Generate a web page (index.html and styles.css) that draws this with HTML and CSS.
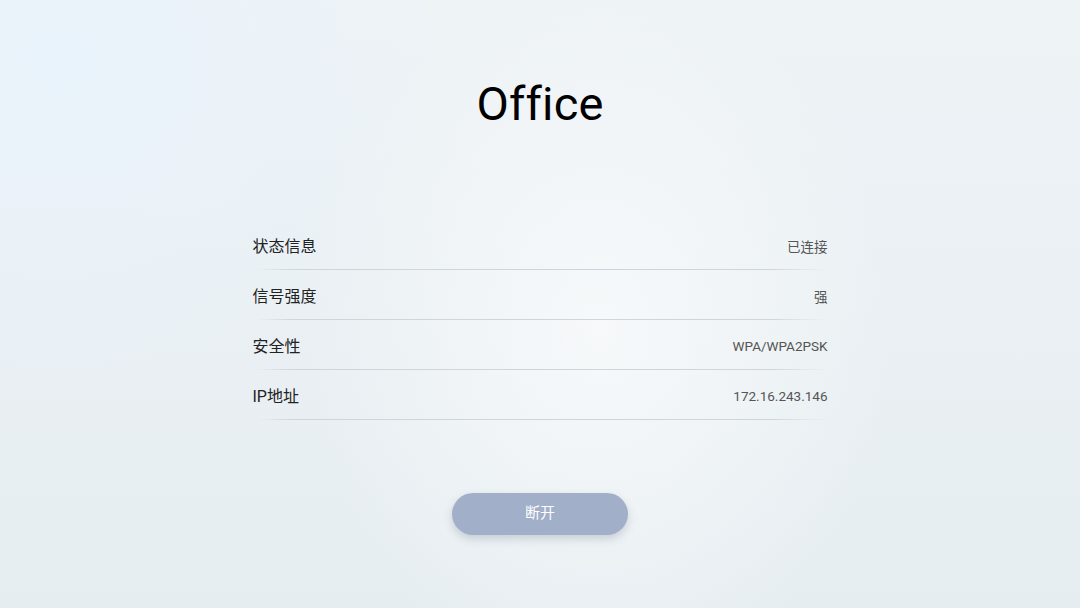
FILE: index.html
```html
<!DOCTYPE html>
<html lang="zh-CN">
<head>
    <meta charset="UTF-8">
    <meta name="viewport" content="width=device-width, initial-scale=1.0">
    <title>Office</title>
    <link rel="stylesheet" href="styles.css">
</head>
<body>
    <div class="page">
        <h1 class="ssid">Office</h1>

        <!-- 网络详情 -->
        <div class="info-list">
            <div class="info-row">
                <span class="label">状态信息</span>
                <span class="value">已连接</span>
            </div>
            <div class="info-row">
                <span class="label">信号强度</span>
                <span class="value">强</span>
            </div>
            <div class="info-row">
                <span class="label">安全性</span>
                <span class="value">WPA/WPA2PSK</span>
            </div>
            <div class="info-row">
                <span class="label">IP地址</span>
                <span class="value">172.16.243.146</span>
            </div>
        </div>

        <button class="button">断开</button>
    </div>
</body>
</html>
```

FILE: styles.css
```css
html, body {
    margin: 0;
    padding: 0;
    height: 100%;
}
body {
    font-family: Roboto, "Noto Sans CJK SC", sans-serif;
    background-color: #e9eff3;
    background-image:
        radial-gradient(ellipse 420px 520px at 600px 330px, rgba(248, 250, 251, 0.9), rgba(248, 250, 251, 0) 70%),
        radial-gradient(ellipse 520px 460px at 60px 60px, rgba(233, 243, 251, 1), rgba(233, 243, 251, 0) 75%),
        linear-gradient(180deg, #eef3f6 0%, #e6edf1 100%);
    overflow: hidden;
}
.page {
    display: flex;
    flex-direction: column;
    align-items: center;
    height: 608px;
    padding-top: 76px;
    box-sizing: border-box;
}
.ssid {
    margin: 0;
    font-size: 47px;
    line-height: 56px;
    font-weight: 400;
    color: #000;
    letter-spacing: 0.2px;
}
.info-list {
    width: 575px;
    margin-top: 88px;
}
.info-row {
    position: relative;
    display: flex;
    justify-content: space-between;
    align-items: center;
    height: 50px;
    padding-bottom: 1px;
    box-sizing: border-box;
}
.info-row::after {
    content: "";
    position: absolute;
    left: 4px;
    right: 0;
    bottom: 0;
    height: 1px;
    background: linear-gradient(90deg, rgba(200, 207, 213, 0) 0%, #cfd6db 6%, #cfd6db 90%, rgba(200, 207, 213, 0) 100%);
}
.label {
    font-size: 16px;
    color: #222;
}
.value {
    font-size: 13.5px;
    color: #555;
    padding-top: 2px;
}
.button {
    margin-top: 73px;
    width: 176px;
    height: 42px;
    padding: 0 0 5px;
    border: none;
    border-radius: 21px;
    background-color: #a1afc9;
    color: #fff;
    font-family: "Noto Sans CJK SC", sans-serif;
    font-size: 15px;
    box-shadow: 0 4px 8px rgba(90, 105, 125, 0.25);
    cursor: pointer;
}
```
